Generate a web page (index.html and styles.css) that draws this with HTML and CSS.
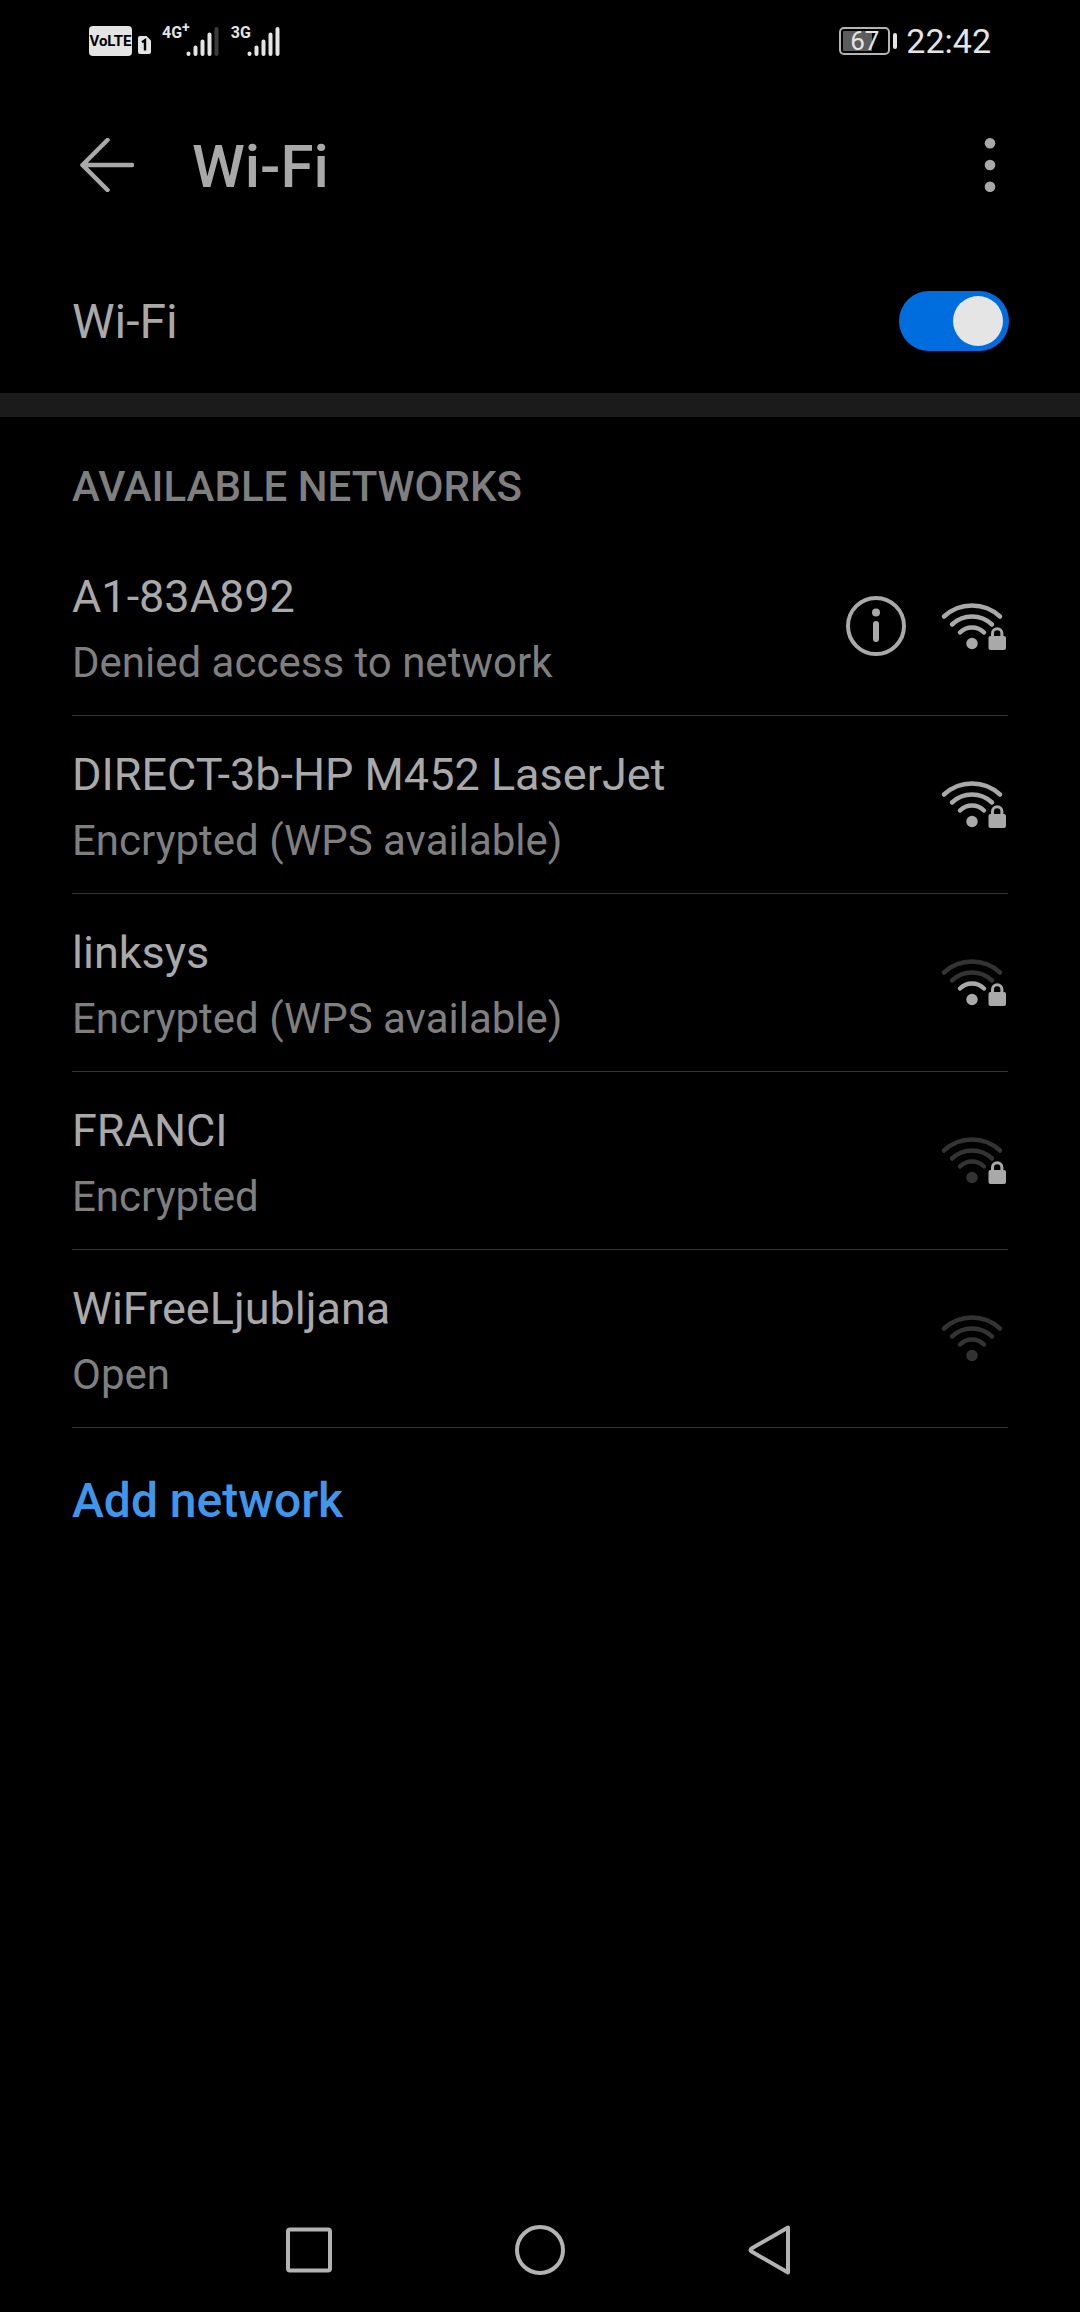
FILE: index.html
```html
<!DOCTYPE html>
<html lang="en">
<head>
<meta charset="utf-8">
<meta name="viewport" content="width=device-width, initial-scale=1">
<title>Wi-Fi</title>
<link rel="stylesheet" href="styles.css">
</head>
<body>
<svg class="defs" aria-hidden="true">
  <symbol id="wifi" viewBox="0 0 68 50">
    <g fill="none" stroke-width="4.500" stroke-linecap="round">
      <path class="arc arc-3" d="M4 15.500A41 41 0 0 1 60 15.500"/>
      <path class="arc arc-2" d="M12 23.500A29 29 0 0 1 52 23.500"/>
      <path class="arc arc-1" d="M20 31.500A17 17 0 0 1 44 31.500"/>
    </g>
    <circle class="dot" cx="32" cy="42.500" r="5.700"/>
  </symbol>
  <symbol id="lock" viewBox="0 0 68 50">
    <path d="M52.500 36V32.500a4.700 4.700 0 0 1 9.400 0V36" fill="none" stroke="#a9a9a9" stroke-width="3"/>
    <rect x="48.500" y="35" width="17.500" height="14" rx="2" fill="#a9a9a9"/>
  </symbol>
</svg>

<div class="status">
  <div class="status-side">
    <span class="volte">VoLTE</span>
    <svg class="sim" viewBox="0 0 13 18" role="img" aria-label="SIM 1"><path fill="#e4e4e4" d="M2 0H8.500L13 4.500V16a2 2 0 0 1-2 2H2a2 2 0 0 1-2-2V2a2 2 0 0 1 2-2z"/><path d="M4 6.300L7 4.300V14.500" fill="none" stroke="#000" stroke-width="2.400"/></svg>
    <span class="signal">
      <span class="gen">4G<sup>+</sup></span>
      <svg class="bars" viewBox="0 0 33 32"><g fill="none" stroke="#e4e4e4" stroke-width="4" stroke-linecap="round"><path d="M2.500 28.500V29M9.500 22.500V29M16.500 16.500V29M23.500 9.500V29"/><path stroke="#3c3c3c" d="M30.500 4V29"/></g></svg>
    </span>
    <span class="signal">
      <span class="gen">3G</span>
      <svg class="bars" viewBox="0 0 33 32"><g fill="none" stroke="#e4e4e4" stroke-width="4" stroke-linecap="round"><path d="M2.500 28.500V29M9.500 22.500V29M16.500 16.500V29M23.500 9.500V29M30.500 4V29"/></g></svg>
    </span>
  </div>
  <div class="status-side">
    <span class="battery"><span class="battery-level">67</span></span>
    <time class="clock">22:42</time>
  </div>
</div>

<header class="header">
  <button class="icon-button" type="button" aria-label="Back">
    <svg width="54" height="54" viewBox="0 0 54 54" fill="none" stroke="#a9a9a9" stroke-width="4.500" stroke-linecap="round" stroke-linejoin="round"><path d="M27.500 2L2.500 27L27.500 52M2.500 27H52"/></svg>
  </button>
  <h1 class="title">Wi-Fi</h1>
  <button class="icon-button" type="button" aria-label="More options">
    <svg width="12" height="54" viewBox="0 0 12 54" fill="#a9a9a9"><circle cx="6" cy="5.300" r="5.300"/><circle cx="6" cy="27" r="5.300"/><circle cx="6" cy="48.700" r="5.300"/></svg>
  </button>
</header>

<main class="main">
  <div class="switch-row">
    <label class="switch-label" for="wifi-switch">Wi-Fi</label>
    <input class="switch" id="wifi-switch" type="checkbox" role="switch" checked>
  </div>

  <section class="networks">
    <h2 class="heading">AVAILABLE NETWORKS</h2>
    <ul class="list">
      <li class="row">
        <div class="text"><span class="name">A1-83A892</span><span class="detail">Denied access to network</span></div>
        <div class="icons">
          <button class="icon-button" type="button" aria-label="Network details">
            <svg width="60" height="60" viewBox="0 0 60 60"><circle cx="30" cy="30" r="28" fill="none" stroke="#a9a9a9" stroke-width="4"/><circle cx="30" cy="16.500" r="4" fill="#a9a9a9"/><path d="M30 28V43" stroke="#a9a9a9" stroke-width="6" stroke-linecap="round"/></svg>
          </button>
          <svg class="wifi level-3" viewBox="0 0 68 50"><use href="#wifi"/><use href="#lock"/></svg>
        </div>
      </li>
      <li class="row">
        <div class="text"><span class="name">DIRECT-3b-HP M452 LaserJet</span><span class="detail">Encrypted (WPS available)</span></div>
        <div class="icons"><svg class="wifi level-3" viewBox="0 0 68 50"><use href="#wifi"/><use href="#lock"/></svg></div>
      </li>
      <li class="row">
        <div class="text"><span class="name">linksys</span><span class="detail">Encrypted (WPS available)</span></div>
        <div class="icons"><svg class="wifi level-1" viewBox="0 0 68 50"><use href="#wifi"/><use href="#lock"/></svg></div>
      </li>
      <li class="row">
        <div class="text"><span class="name">FRANCI</span><span class="detail">Encrypted</span></div>
        <div class="icons"><svg class="wifi level-0" viewBox="0 0 68 50"><use href="#wifi"/><use href="#lock"/></svg></div>
      </li>
      <li class="row">
        <div class="text"><span class="name">WiFreeLjubljana</span><span class="detail">Open</span></div>
        <div class="icons"><svg class="wifi level-0" viewBox="0 0 68 50"><use href="#wifi"/></svg></div>
      </li>
    </ul>
    <button class="add" type="button">Add network</button>
  </section>
</main>

<nav class="nav" aria-label="System">
  <button class="nav-button" type="button" aria-label="Recent apps"><svg width="50" height="50" viewBox="0 0 50 50"><rect x="4" y="4.500" width="42" height="41" rx="2" fill="none" stroke="#b3b3b3" stroke-width="4"/></svg></button>
  <button class="nav-button" type="button" aria-label="Home"><svg width="50" height="50" viewBox="0 0 50 50"><circle cx="25" cy="25" r="23" fill="none" stroke="#b3b3b3" stroke-width="4"/></svg></button>
  <button class="nav-button" type="button" aria-label="Back"><svg width="50" height="50" viewBox="0 0 50 50"><path d="M42 2.500V47.500L5.500 26.500Q3.500 25 5.500 23.500Z" fill="none" stroke="#b3b3b3" stroke-width="4" stroke-linejoin="round"/></svg></button>
</nav>
</body>
</html>
```
FILE: styles.css
```css
* {
  box-sizing: border-box;
}

body {
  display: flex;
  flex-direction: column;
  min-height: 100vh;
  margin: 0;
  background: #000;
  color: #a9a9a9;
  font-family: Roboto, "Noto Sans", sans-serif;
}

button {
  padding: 0;
  border: 0;
  background: none;
  color: inherit;
  font: inherit;
}

svg {
  display: block;
  flex: none;
}

.defs {
  position: absolute;
  width: 0;
  height: 0;
}

/* Status bar */
.status {
  display: flex;
  align-items: center;
  justify-content: space-between;
  padding: 20px 89px;
  color: #e4e4e4;
}

.status-side {
  display: flex;
  align-items: center;
  height: 42px;
}

.volte,
.gen {
  font-family: "Liberation Sans Narrow", Roboto, sans-serif;
  font-weight: 700;
}

.volte {
  width: 43px;
  border-radius: 4px;
  background: #e4e4e4;
  color: #000;
  font-size: 15px;
  line-height: 30px;
  text-align: center;
}

.sim {
  width: 13px;
  height: 18px;
  margin: 8px 11px 0 6px;
}

.signal {
  display: flex;
  height: 32px;
  margin-right: 12px;
}

.gen {
  font-size: 16px;
  line-height: 16px;
}

.gen sup {
  font-size: 14px;
  line-height: 0;
}

.bars {
  width: 33px;
  height: 32px;
  margin-left: -4px;
}

.battery {
  display: flex;
  align-items: center;
  margin-right: 9px;
}

.battery::after {
  width: 4px;
  height: 16px;
  margin-left: 3px;
  border-radius: 2px;
  background: #e4e4e4;
  content: "";
}

.battery-level {
  width: 51px;
  padding: 2px;
  border: 2px solid #b4b4b4;
  border-radius: 5px;
  background: linear-gradient(90deg, #5c5c5c 67%, #000 67%) content-box;
  font-size: 26px;
  line-height: 20px;
  text-align: center;
}

.clock {
  font-size: 34px;
  line-height: 42px;
}

/* Title bar */
.header {
  display: flex;
  align-items: center;
  height: 166px;
  padding: 0 84px 0 80px;
}

.title {
  flex: 1;
  margin: 0;
  padding: 4px 0 0 58px;
  font-size: 60px;
  font-weight: 500;
  line-height: 80px;
}

.switch-row {
  display: flex;
  align-items: center;
  justify-content: space-between;
  height: 169px;
  padding: 0 71px 0 72px;
  border-bottom: 24px solid #1b1b1b;
}

.switch-label {
  padding-top: 3px;
  font-size: 48px;
  line-height: 64px;
}

.switch {
  display: flex;
  align-items: center;
  justify-content: flex-end;
  width: 110px;
  height: 60px;
  margin: 0;
  padding: 6px;
  border-radius: 30px;
  background: #006ddf;
  appearance: none;
}

.switch::before {
  width: 50px;
  height: 50px;
  border-radius: 50%;
  background: #e5e5e5;
  content: "";
}

.switch:not(:checked) {
  justify-content: flex-start;
  background: #333;
}

/* Network list */
.main {
  flex: 1;
}

.networks {
  padding: 0 72px;
}

.heading {
  margin: 0;
  padding: 40px 0 21px;
  color: #7f7f7f;
  font-size: 42px;
  font-weight: 500;
  line-height: 60px;
}

.list {
  margin: 0;
  padding: 0;
  list-style: none;
}

.row {
  display: flex;
  align-items: center;
  gap: 34px;
  min-height: 178px;
  border-bottom: 1px solid #333;
}

.text {
  display: flex;
  flex: 1;
  flex-direction: column;
}

.name {
  font-size: 45px;
  line-height: 72px;
}

.detail {
  color: #7f7f7f;
  font-size: 42px;
  line-height: 60px;
}

.icons {
  display: flex;
  align-items: center;
  gap: 34px;
  padding-bottom: 2px;
}

.wifi {
  width: 68px;
  height: 50px;
}

.dot {
  fill: var(--near);
}

.arc-1 {
  stroke: var(--near);
}

.arc-2,
.arc-3 {
  stroke: var(--far);
}

.level-3 {
  --near: #a9a9a9;
  --far: #a9a9a9;
}

.level-1 {
  --near: #a9a9a9;
  --far: #333;
}

.level-0 {
  --near: #333;
  --far: #333;
}

.add {
  display: block;
  width: 100%;
  padding: 41px 0;
  color: #4096ea;
  font-size: 48px;
  font-weight: 500;
  line-height: 64px;
  text-align: left;
}

/* System navigation */
.nav {
  display: flex;
  justify-content: center;
  padding: 36px 0 37px;
}

.nav-button {
  display: flex;
  justify-content: center;
  width: 231px;
}
```
